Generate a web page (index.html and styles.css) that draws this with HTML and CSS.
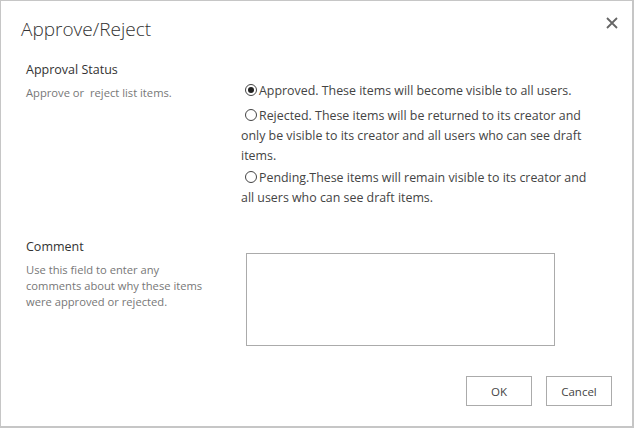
FILE: index.html
```html
<!DOCTYPE html>
<html lang="en">
<head>
    <meta charset="UTF-8">
    <meta name="viewport" content="width=device-width, initial-scale=1.0">
    <title>Approve/Reject</title>
    <link rel="stylesheet" href="styles.css">
</head>
<body>
    <div class="dialog">
        <div class="header">
            <h1>Approve/Reject</h1>
            <button class="close" title="Close">
                <svg width="12" height="12" viewBox="0 0 12 12">
                    <path d="M1 1 L11 11 M11 1 L1 11" stroke="#666" stroke-width="1.8" fill="none"/>
                </svg>
            </button>
        </div>

        <div class="section status">
            <div class="label">
                <h3>Approval Status</h3>
                <p>Approve or &nbsp;reject list items.</p>
            </div>
            <div class="field">
                <label class="option first">
                    <input type="radio" name="status" checked>Approved. These items will become visible to all users.
                </label>
                <label class="option">
                    <input type="radio" name="status">Rejected. These items will be returned to its creator and only be visible to its creator and all users who can see draft items.
                </label>
                <label class="option">
                    <input type="radio" name="status">Pending.These items will remain visible to its creator and all users who can see draft items.
                </label>
            </div>
        </div>

        <div class="section comment">
            <div class="label">
                <h3>Comment</h3>
                <p>Use this field to enter any comments about why these items were approved or rejected.</p>
            </div>
            <div class="field">
                <textarea></textarea>
            </div>
        </div>

        <div class="actions">
            <button class="btn">OK</button>
            <button class="btn">Cancel</button>
        </div>
    </div>
</body>
</html>
```

FILE: styles.css
```css
* {
    box-sizing: border-box;
}

body {
    margin: 0;
    padding: 0;
    font-family: "Open Sans", "Noto Sans", sans-serif;
    color: #444;
    background: white;
}

.dialog {
    width: 634px;
    height: 428px;
    border: 1px solid #c6c6c6;
    border-right-width: 2px;
    border-bottom-width: 2px;
    padding: 0 20px 0 25px;
}

.header {
    display: flex;
    justify-content: space-between;
    align-items: flex-start;
    margin-left: -5px;
}

.header h1 {
    margin: 14px 0 0 0;
    font-size: 19px;
    font-weight: 300;
    line-height: 28px;
    color: #333;
}

.close {
    border: none;
    background: none;
    padding: 0;
    margin: 15px -7px 0 0;
    width: 14px;
    height: 14px;
    display: flex;
    align-items: center;
    justify-content: center;
}

.section {
    display: grid;
    grid-template-columns: 215px 1fr;
}

.label h3 {
    margin: 0;
    font-size: 12.5px;
    font-weight: 400;
    line-height: 18px;
    color: #333;
}

.label p {
    margin: 6px 0 0 0;
    font-size: 11.2px;
    line-height: 16px;
    color: #777;
    width: 186px;
}

.status {
    margin-top: 18px;
}

.status .field {
    padding-top: 20px;
    width: 352px;
}

.option {
    display: block;
    font-size: 12.4px;
    line-height: 20px;
    color: #444;
    margin-bottom: 2px;
}

.option.first {
    margin-bottom: 5px;
}

.option input {
    appearance: none;
    width: 12px;
    height: 12px;
    border: 1px solid #444;
    border-radius: 50%;
    margin: 0 2px 0 4px;
    vertical-align: -1px;
    position: relative;
    background: white;
}

.option input:checked::after {
    content: "";
    position: absolute;
    top: 2px;
    left: 2px;
    width: 6px;
    height: 6px;
    border-radius: 50%;
    background: #222;
}

.comment {
    margin-top: 28px;
}

.comment .field {
    padding: 15px 0 0 5px;
}

.comment textarea {
    display: block;
    width: 309px;
    height: 93px;
    border: 1px solid #ababab;
    resize: none;
    margin: 0;
}

.actions {
    display: flex;
    justify-content: flex-end;
    gap: 14px;
    margin-top: 30px;
}

.btn {
    width: 66px;
    height: 30px;
    border: 1px solid #ababab;
    background: white;
    font-family: inherit;
    font-size: 11.5px;
    color: #444;
    padding: 0;
}
```
